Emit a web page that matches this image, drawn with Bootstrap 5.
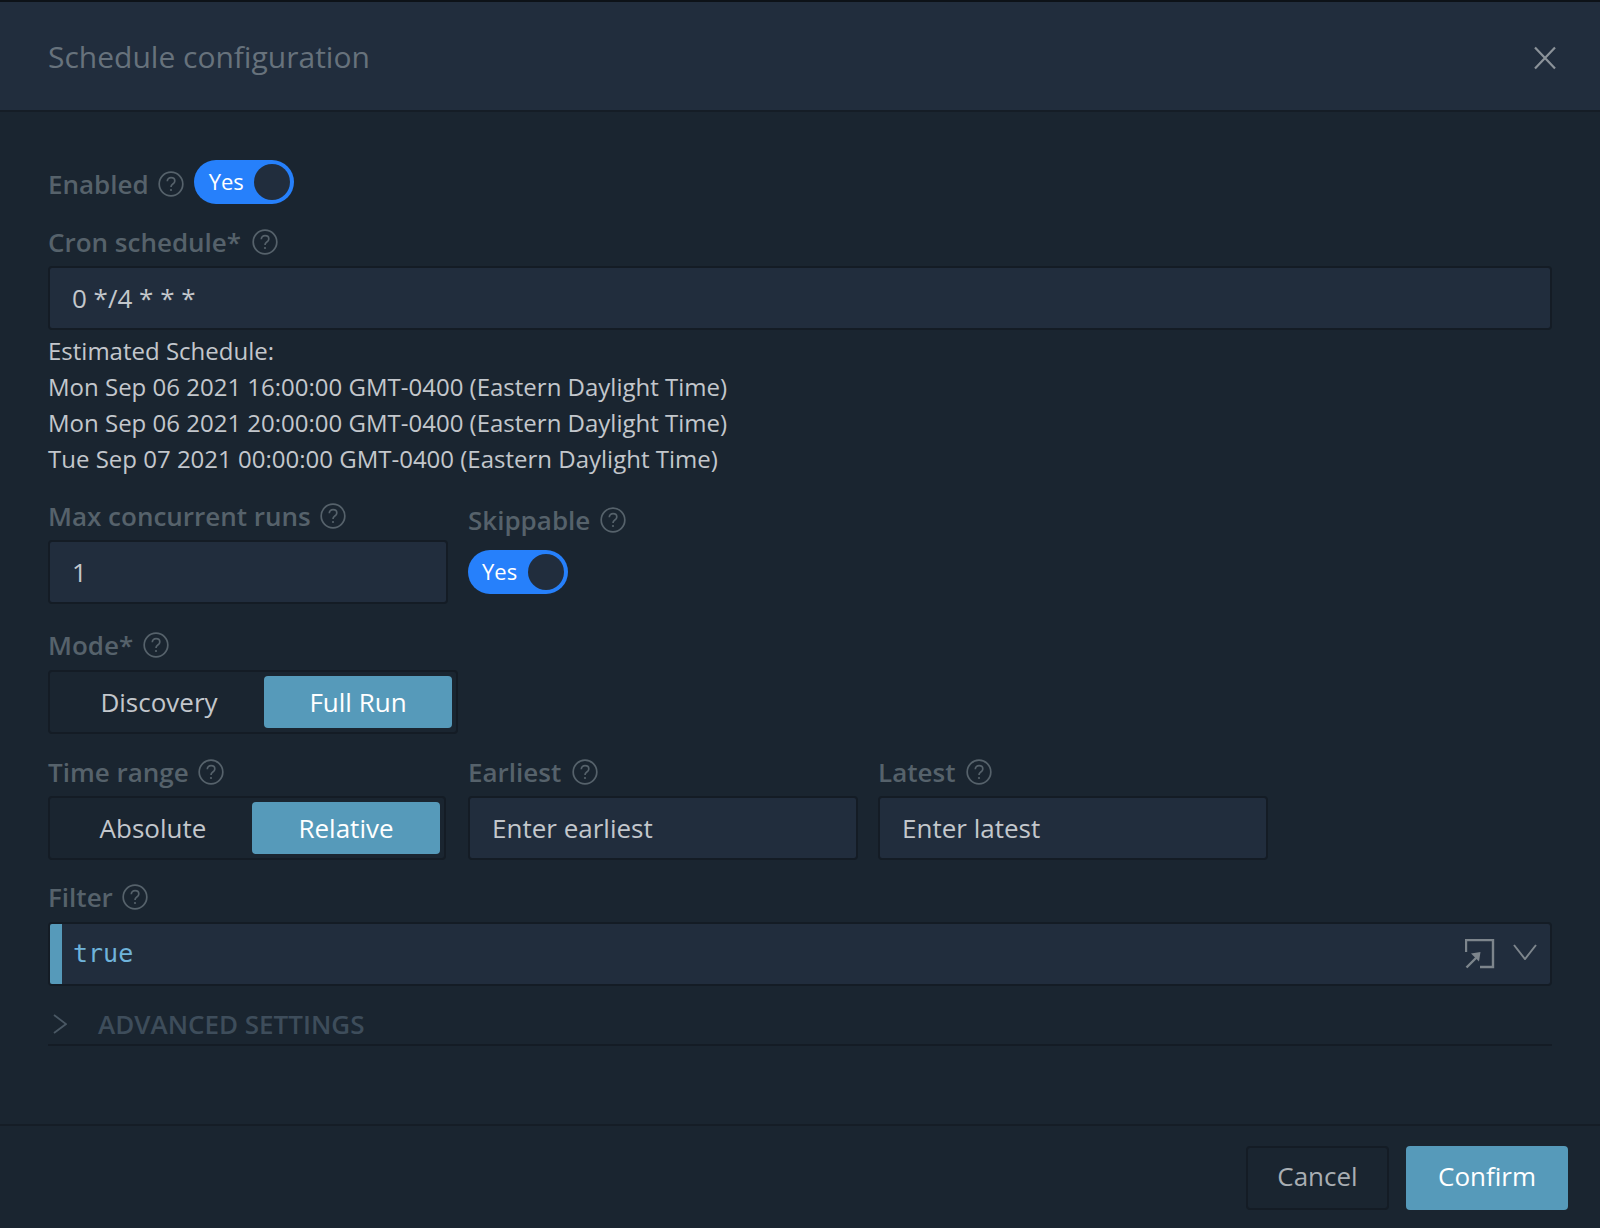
<!DOCTYPE html>
<html lang="en">
<head>
<meta charset="utf-8">
<title>Schedule configuration</title>
<link href="https://cdn.jsdelivr.net/npm/bootstrap@5.3.0/dist/css/bootstrap.min.css" rel="stylesheet">
<style>
html,body{height:100%;}
body{background:#1a2530;font-family:"Open Sans","Liberation Sans",sans-serif;color:#c3c7cc;overflow:hidden;}
.sched-dialog{height:1228px;display:flex;flex-direction:column;border-top:2px solid #0d1218;background:#1a2530;}
.sched-head{height:110px;background:#212d3d;border-bottom:2px solid #151d26;padding:0 48px;flex:none;}
.sched-title{font-size:30px;line-height:1;margin:2px 0 0;color:#67727c;font-weight:400;}
.sched-close{width:24px;height:24px;margin-right:-5px;margin-top:1px;padding:0;background:none;border:0;display:block;}
.sched-main{flex:1 1 auto;padding:48px 48px 0;}
.sched-foot{flex:none;height:104px;border-top:2px solid #151d26;padding:20px 32px 0 0;gap:17px;}
.lab{font-size:26px;line-height:36px;font-weight:600;color:#56626b;margin:0;display:flex;align-items:center;}
.qmark{width:26px;height:26px;margin-left:9px;flex:none;display:block;}
.sw{width:100px;height:44px;border-radius:22px;background:#2680fb;color:#fff;font-size:22px;line-height:42px;padding-left:14px;position:relative;}
.sw-first{padding-left:15px;margin-left:10px;}
.sw-knob{position:absolute;right:4px;top:4px;width:36px;height:36px;border-radius:50%;background:#212d3d;}
.fld.form-control{height:64px;background:#212d3d;border:2px solid #141c25;border-radius:4px;color:#c3c7cc;font-size:26px;line-height:36px;padding:0 22px;box-shadow:none;}
.fld.form-control::placeholder{color:#c3c7cc;opacity:1;}
.est{font-size:24px;line-height:36px;color:#c3c7cc;}
.seg{height:64px;border:2px solid #141c25;border-radius:4px;padding:4px;display:flex;}
.seg-opt{flex:1 1 50%;border:0;background:transparent;color:#c3c7cc;font-size:26px;line-height:52px;height:52px;padding:0;border-radius:4px;}
.seg-on{background:#569aba;color:#fff;}
.editor{height:64px;background:#212d3d;border:2px solid #141c25;border-radius:4px;display:flex;align-items:center;overflow:hidden;}
.editor-gutter{width:12px;height:100%;background:#569aba;flex:none;}
.editor-code{font-family:"DejaVu Sans Mono","Liberation Mono",monospace;font-size:25px;color:#6fb3da;padding-left:11px;line-height:1;margin-top:-2px;}
.adv{height:43px;border-bottom:2px solid #141c25;display:flex;align-items:center;font-size:26px;font-weight:600;color:#3e4d5b;line-height:1;}
.act{height:64px;font-size:26px;line-height:1;border-radius:4px;padding:0 0 4px;}
.act-ghost{width:143px;background:transparent;border:2px solid #141c25;color:#a9aeb3;}
.act-main{width:162px;background:#569aba;border:0;color:#fff;}
</style>
</head>
<body>
<div class="sched-dialog">
  <header class="sched-head d-flex align-items-center justify-content-between">
    <h5 class="sched-title">Schedule configuration</h5>
    <button class="sched-close" type="button" aria-label="Close"><svg width="24" height="24" viewBox="0 0 24 24"><path d="M2 1.500 22 22.500M22 1.500 2 22.500" stroke="#8b9299" stroke-width="2.200" fill="none"/></svg></button>
  </header>
  <main class="sched-main">
    <div class="d-flex align-items-center" style="height:44px;margin-bottom:4px">
      <label class="lab" style="margin-top:4px">Enabled<svg class="qmark" viewBox="0 0 26 26"><use href="#qm"/></svg></label>
      <div class="sw sw-first">Yes<span class="sw-knob"></span></div>
    </div>
    <label class="lab" style="margin-bottom:6px;margin-top:20px">Cron schedule*<svg class="qmark" viewBox="0 0 26 26" style="margin-left:11px"><use href="#qm"/></svg></label>
    <input class="form-control fld" value="0 */4 * * *">
    <div class="est" style="margin-top:3px">
      <div>Estimated Schedule:</div>
      <div>Mon Sep 06 2021 16:00:00 GMT-0400 (Eastern Daylight Time)</div>
      <div>Mon Sep 06 2021 20:00:00 GMT-0400 (Eastern Daylight Time)</div>
      <div>Tue Sep 07 2021 00:00:00 GMT-0400 (Eastern Daylight Time)</div>
    </div>
    <div class="d-flex" style="margin-top:21px;gap:20px">
      <div style="width:400px">
        <label class="lab" style="margin-bottom:6px">Max concurrent runs<svg class="qmark" viewBox="0 0 26 26"><use href="#qm"/></svg></label>
        <input class="form-control fld" value="1">
      </div>
      <div>
        <label class="lab" style="margin-top:4px;margin-bottom:12px">Skippable<svg class="qmark" viewBox="0 0 26 26" style="margin-left:10px"><use href="#qm"/></svg></label>
        <div class="sw">Yes<span class="sw-knob"></span></div>
      </div>
    </div>
    <label class="lab" style="margin-top:23px;margin-bottom:7px">Mode*<svg class="qmark" viewBox="0 0 26 26" style="margin-left:10px"><use href="#qm"/></svg></label>
    <div class="seg" style="width:410px">
      <button type="button" class="seg-opt" style="flex:0 0 210px">Discovery</button>
      <button type="button" class="seg-opt seg-on">Full Run</button>
    </div>
    <div class="d-flex" style="margin-top:20px;gap:20px">
      <div style="width:400px">
        <label class="lab" style="margin-bottom:6px">Time range<svg class="qmark" viewBox="0 0 26 26"><use href="#qm"/></svg></label>
        <div class="seg" style="width:398px">
          <button type="button" class="seg-opt" style="flex:0 0 198px">Absolute</button>
          <button type="button" class="seg-opt seg-on" style="flex:0 0 188px">Relative</button>
        </div>
      </div>
      <div style="width:390px">
        <label class="lab" style="margin-bottom:6px">Earliest<svg class="qmark" viewBox="0 0 26 26" style="margin-left:11px"><use href="#qm"/></svg></label>
        <input class="form-control fld" placeholder="Enter earliest">
      </div>
      <div style="width:390px">
        <label class="lab" style="margin-bottom:6px">Latest<svg class="qmark" viewBox="0 0 26 26" style="margin-left:11px"><use href="#qm"/></svg></label>
        <input class="form-control fld" placeholder="Enter latest">
      </div>
    </div>
    <label class="lab" style="margin-top:19px;margin-bottom:7px">Filter<svg class="qmark" viewBox="0 0 26 26"><use href="#qm"/></svg></label>
    <div class="editor">
      <div class="editor-gutter"></div>
      <div class="editor-code flex-grow-1">true</div>
      <svg width="30" height="30" viewBox="0 0 30 30" style="margin-right:18px;flex:none"><path d="M1 13V1H28V28H15" stroke="#7d858c" stroke-width="2.400" fill="none"/><path d="M1.500 28.500 13 17" stroke="#7d858c" stroke-width="2.400" fill="none"/><path d="M6 14.500 15.500 13 14 22.500Z" fill="#7d858c"/></svg>
      <svg width="24" height="16" viewBox="0 0 24 16" style="margin-right:13px;margin-top:-5px;flex:none"><path d="M1 1 12 15 23 1" stroke="#7d858c" stroke-width="2" fill="none"/></svg>
    </div>
    <div class="adv" style="margin-top:17px">
      <svg width="14" height="20" viewBox="0 0 14 20" style="margin-left:5px;margin-right:31px;flex:none"><path d="M1 1 13 10 1 19" stroke="#4a5864" stroke-width="1.800" fill="none"/></svg>
      ADVANCED SETTINGS
    </div>
  </main>
  <footer class="sched-foot d-flex justify-content-end align-items-start">
    <button type="button" class="btn act act-ghost">Cancel</button>
    <button type="button" class="btn act act-main">Confirm</button>
  </footer>
</div>
<svg width="0" height="0" style="position:absolute" aria-hidden="true"><defs><g id="qm"><circle cx="13" cy="13" r="11.800" fill="none" stroke="#56626b" stroke-width="1.700"/><path d="M9.300 10.300c0-2.300 1.600-3.600 3.800-3.600s3.700 1.300 3.700 3.200c0 1.500-.8 2.300-2 3.100-1.200.8-1.800 1.500-1.800 3" fill="none" stroke="#56626b" stroke-width="1.700"/><circle cx="13" cy="19" r="1.100" fill="#56626b"/></g></defs></svg>
<script src="https://cdn.jsdelivr.net/npm/bootstrap@5.3.0/dist/js/bootstrap.bundle.min.js"></script>
</body>
</html>
